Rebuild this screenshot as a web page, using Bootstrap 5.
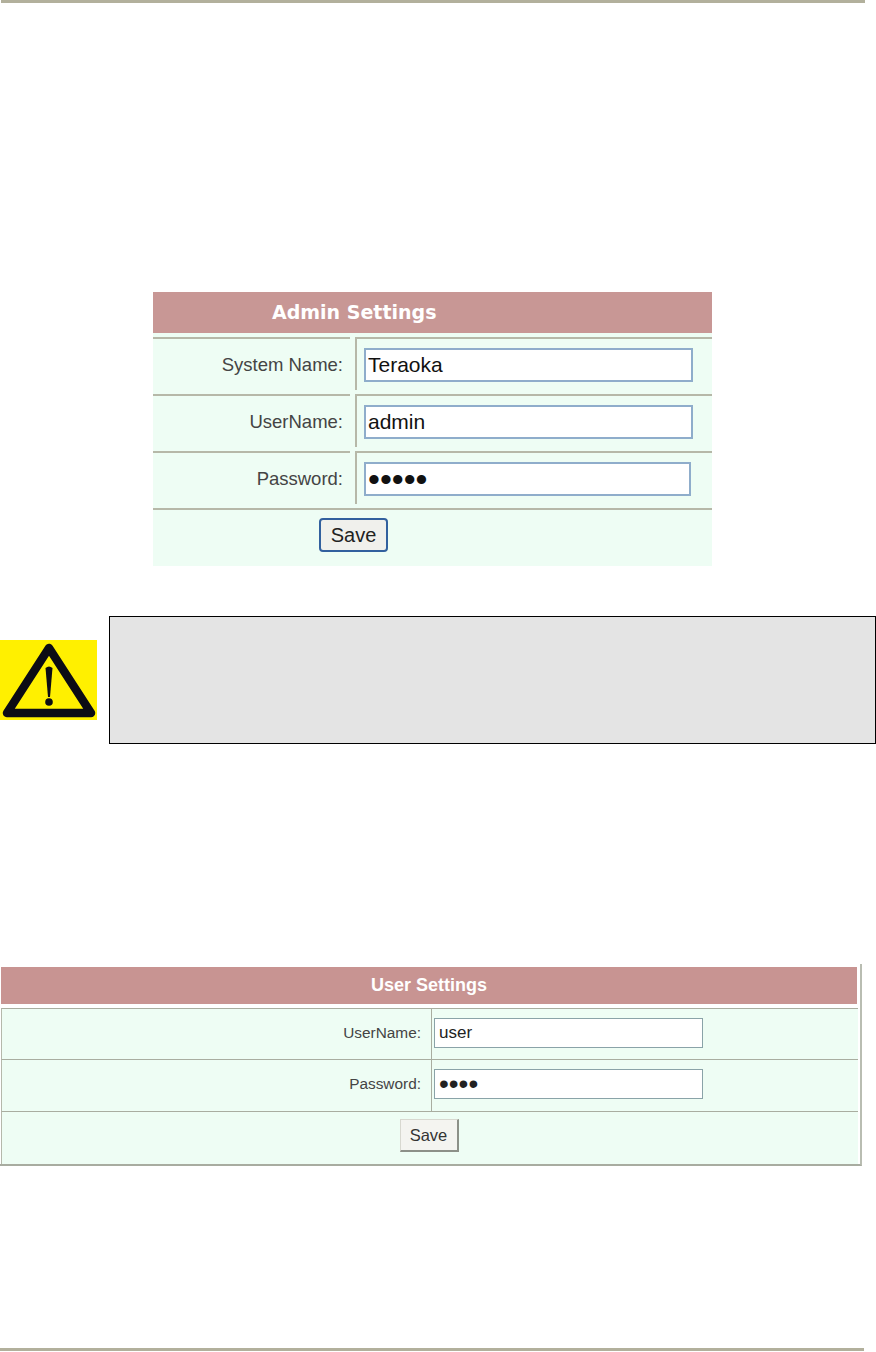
<!DOCTYPE html>
<html lang="en">
<head>
    <meta charset="UTF-8">
    <meta name="viewport" content="width=device-width, initial-scale=1.0">
    <title>Admin and User Settings</title>
    <link href="https://cdn.jsdelivr.net/npm/bootstrap@5.3.0/dist/css/bootstrap.min.css" rel="stylesheet">
    <style>
        body { background: #fff; font-family: "Liberation Sans", Arial, sans-serif; height: 1352px; overflow: hidden; }
        .rule { height: 3px; width: 864px; background: #b2b09c; }
        .rule-top { margin: 0 0 0 1px; }

        /* admin form */
        .admin-box { width: 559px; margin: 289px 0 0 153px; background: #eefdf4; color: #444; }
        .admin-head { height: 41px; background: #c89795; color: #fff; font: bold 19px "DejaVu Sans", sans-serif; line-height: 41px; padding-left: 119px; margin-bottom: 4px; }
        .admin-row { height: 57px; }
        .admin-label { width: 197px; margin-right: 5px; border-top: 2px solid #b6b8a8; height: 53px; padding: 15px 7px 0 0; text-align: right; font-size: 18.500px; line-height: 22px; }
        .admin-field { flex: 1; border-top: 2px solid #b6b8a8; border-left: 2px solid #b6b8a8; height: 53px; padding: 9px 0 0 7px; }
        .admin-box .form-control { width: 329px; height: 34px; border: 2px solid #8fadcb; border-radius: 0; padding: 0 2px; font-size: 21px; color: #111; box-shadow: none; }
        .admin-box .short-field { width: 327px; font-size: 34px; line-height: 1; }
        .admin-foot { height: 58px; border-top: 2px solid #b6b8a8; padding: 8px 0 0 166px; }
        .save-admin { width: 69px; height: 34px; padding: 0; border: 2px solid #32609e; border-radius: 4px; background: #f0f0ec; color: #222; font-size: 20px; line-height: 26px; }

        /* warning */
        .warn-row { margin-top: 50px; }
        .warn-icon { width: 97px; height: 80px; margin: 24px 12px 0 0; flex: none; }
        .warn-box { width: 767px; height: 128px; background: #e4e4e4; border: 1px solid #000; }

        /* user form */
        .user-box { width: 862px; height: 202px; margin-top: 220px; padding: 3px 0 0 1px; border-right: 2px solid #b9bdb2; border-bottom: 2px solid #a8aca0; color: #444; }
        .user-head { width: 856px; height: 37px; background: #c89492; color: #fff; font-weight: bold; font-size: 18px; line-height: 37px; text-align: center; margin-bottom: 4px; }
        .user-row { height: 51px; background: #eefdf4; width: 857px; }
        .user-row-tall { height: 52px; }
        .user-label { width: 430px; border-top: 1px solid #a9ada0; padding: 13px 10px 0 0; text-align: right; font-size: 15.400px; line-height: 22px; border-left: 1px solid #b5b8ab; }
        .user-field { flex: 1; border-top: 1px solid #a9ada0; border-left: 1px solid #a9ada0; padding: 9px 0 0 2px; }
        .user-box .form-control { width: 269px; height: 30px; border: 1px solid #8aa3a8; border-radius: 0; padding: 0 4px; font-size: 17px; color: #222; box-shadow: none; }
        .user-box .form-control[type=password] { font-size: 28px; line-height: 1; }
        .user-foot { height: 53px; width: 857px; background: #eefdf4; border-top: 1px solid #a9ada0; border-left: 1px solid #b5b8ab; padding: 7px 2px 0 0; text-align: center; }
        .save-user { width: 59px; height: 33px; padding: 0; border: 1px solid #d8d8d0; border-right: 2px solid #8c9088; border-bottom: 2px solid #8c9088; border-radius: 0; background: #f4f4f0; color: #333; font-size: 16.500px; }

        .rule-bottom { margin-top: 182px; }
    </style>
</head>
<body>
    <div class="rule rule-top"></div>

    <!-- Admin Settings -->
    <form class="admin-box">
        <div class="admin-head">Admin Settings</div>
        <div class="admin-row d-flex">
            <div class="admin-label">System Name:</div>
            <div class="admin-field"><input type="text" class="form-control" value="Teraoka"></div>
        </div>
        <div class="admin-row d-flex">
            <div class="admin-label">UserName:</div>
            <div class="admin-field"><input type="text" class="form-control" value="admin"></div>
        </div>
        <div class="admin-row d-flex">
            <div class="admin-label">Password:</div>
            <div class="admin-field"><input type="password" class="form-control short-field" value="admin"></div>
        </div>
        <div class="admin-foot"><button type="button" class="btn save-admin">Save</button></div>
    </form>

    <!-- Warning -->
    <div class="warn-row d-flex">
        <svg class="warn-icon" viewBox="0 0 97 80">
            <rect width="97" height="80" fill="#fff000"/>
            <path d="M49 8 L7 73 H91 Z" fill="none" stroke="#0c0c14" stroke-width="8.500" stroke-linejoin="round"/>
            <path d="M45.500 28 Q49 25 52.500 28 L50 57 H48 Z" fill="#0c0c14"/>
            <circle cx="49" cy="62" r="3.800" fill="#0c0c14"/>
        </svg>
        <div class="warn-box"></div>
    </div>

    <!-- User Settings -->
    <form class="user-box">
        <div class="user-head">User Settings</div>
        <div class="user-row d-flex">
            <div class="user-label">UserName:</div>
            <div class="user-field"><input type="text" class="form-control" value="user"></div>
        </div>
        <div class="user-row user-row-tall d-flex">
            <div class="user-label">Password:</div>
            <div class="user-field"><input type="password" class="form-control" value="user"></div>
        </div>
        <div class="user-foot"><button type="button" class="btn save-user">Save</button></div>
    </form>

    <div class="rule rule-bottom"></div>

    <script src="https://cdn.jsdelivr.net/npm/bootstrap@5.3.0/dist/js/bootstrap.bundle.min.js"></script>
</body>
</html>
